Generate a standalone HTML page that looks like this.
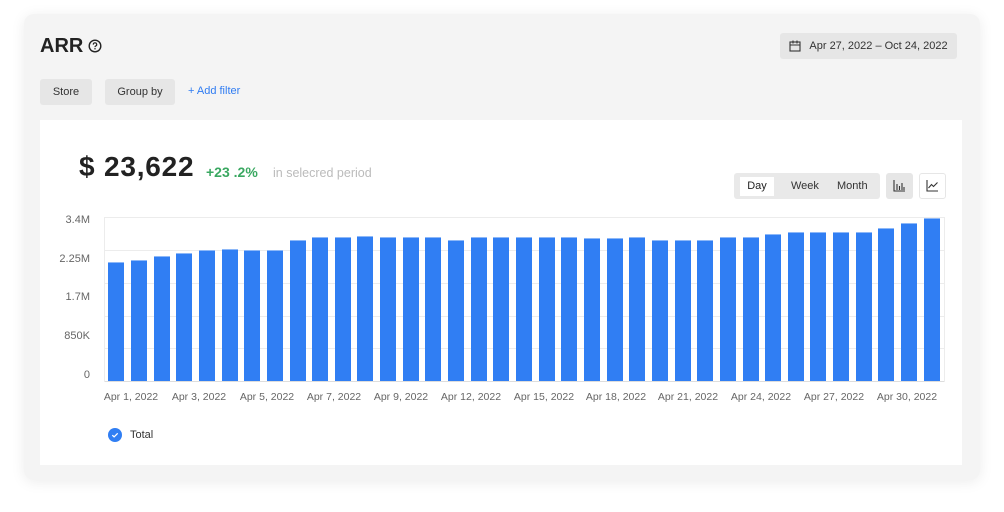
<!DOCTYPE html>
<html><head><meta charset="utf-8"><style>
*{margin:0;padding:0;box-sizing:border-box}
body{width:1004px;height:512px;background:#fff;font-family:"Liberation Sans",Arial,sans-serif;position:relative;overflow:hidden}
.card{position:absolute;left:24px;top:14px;width:956px;height:466px;background:#f4f4f4;border-radius:10px;box-shadow:0 2px 14px rgba(0,0,0,.08)}
.abs{position:absolute}
.btn{position:absolute;background:#e6e6e6;border-radius:3px;font-size:11px;color:#333;display:flex;align-items:center;justify-content:center}
.panel{position:absolute;left:40px;top:120px;width:922px;height:345px;background:#fff}
.yl{position:absolute;right:914px;font-size:11px;color:#666;text-align:right}
.xl{position:absolute;top:391px;font-size:10.5px;color:#666;width:80px;text-align:center}
.grid{position:absolute;left:104px;width:841px;height:1px;background:#ececec}
.bar{position:absolute;width:16px;background:#307ef3;bottom:131px;border-top:1px solid #8db8f8}
</style></head><body>
<div class="card"></div>
<div class="abs" style="left:40px;top:35px;font-size:20px;font-weight:bold;color:#222">ARR</div>
<svg class="abs" style="left:88px;top:39px" width="14" height="14" viewBox="0 0 14 14"><circle cx="7" cy="7" r="5.8" fill="none" stroke="#222" stroke-width="1.4"/><path d="M5.3 5.6a1.7 1.7 0 1 1 2.3 1.5c-.5.2-.6.5-.6 1" fill="none" stroke="#222" stroke-width="1.2"/><circle cx="7" cy="9.8" r=".75" fill="#222"/></svg>
<div class="btn" style="left:780px;top:33px;width:177px;height:26px;color:#333;font-size:11px"><svg width="12" height="12" viewBox="0 0 12 12" style="margin-right:8px"><rect x="1" y="2" width="10" height="9" fill="none" stroke="#333" stroke-width="1.1"/><path d="M1 5h10M4 .5v3M8 .5v3" stroke="#333" stroke-width="1.1"/></svg>Apr 27, 2022 – Oct 24, 2022</div>
<div class="btn" style="left:40px;top:79px;width:52px;height:26px">Store</div>
<div class="btn" style="left:105px;top:79px;width:70px;height:26px">Group by</div>
<div class="abs" style="left:188px;top:85px;font-size:11px;color:#2f7cf2">+ Add filter</div>
<div class="panel"></div>
<div class="abs" style="left:79px;top:151px;font-size:28px;font-weight:bold;color:#222;letter-spacing:.8px">$ 23,622</div>
<div class="abs" style="left:206px;top:164px;font-size:14px;font-weight:bold;color:#3aa861">+23 .2%</div>
<div class="abs" style="left:273px;top:166px;font-size:12.5px;color:#bbb">in selecred period</div>
<div class="abs" style="left:734px;top:173px;width:146px;height:26px;background:#e9e9e9;border-radius:3px"></div>
<div class="abs" style="left:740px;top:177px;width:34px;height:19px;background:#fff;font-size:11px;color:#222;text-align:center;line-height:19px">Day</div>
<div class="abs" style="left:791px;top:180px;font-size:11px;color:#333">Week</div>
<div class="abs" style="left:837px;top:180px;font-size:11px;color:#333">Month</div>
<div class="abs" style="left:886px;top:173px;width:27px;height:26px;background:#e6e6e6;border-radius:3px"></div>
<svg class="abs" style="left:893px;top:179px" width="13" height="13" viewBox="0 0 13 13"><path d="M1 1v11h11M4 11V5M6.5 11V7M9 11V4M11 11V8" stroke="#333" stroke-width="1.1" fill="none"/></svg>
<div class="abs" style="left:919px;top:173px;width:27px;height:26px;background:#fff;border:1px solid #e6e6e6;border-radius:3px"></div>
<svg class="abs" style="left:926px;top:179px" width="13" height="13" viewBox="0 0 13 13"><path d="M1 1v11h11M2.5 9l3-3.5 2 2 4-4" stroke="#333" stroke-width="1.1" fill="none"/></svg>
<div class="grid" style="top:217px"></div><div class="grid" style="top:250px"></div><div class="grid" style="top:283px"></div><div class="grid" style="top:316px"></div><div class="grid" style="top:348px"></div><div class="grid" style="top:381px;background:#ddd"></div>
<div class="abs" style="left:104px;top:217px;width:1px;height:165px;background:#ececec"></div>
<div class="abs" style="left:944px;top:217px;width:1px;height:165px;background:#ececec"></div>
<div class="yl" style="top:214px">3.4M</div><div class="yl" style="top:253px">2.25M</div><div class="yl" style="top:291px">1.7M</div><div class="yl" style="top:330px">850K</div><div class="yl" style="top:369px">0</div>
<div id="bars"></div>
<script>
var t=[262,260,256,253,250,249,250,250,240,237,237,236,237,237,237,240,237,237,237,237,237,238,238,237,240,240,240,237,237,234,232,232,232,232,228,223,218];
var h='';for(var i=0;i<t.length;i++){h+='<div class="bar" style="left:'+(108.3+i*22.65).toFixed(1)+'px;top:'+t[i]+'px"></div>';}
document.getElementById('bars').innerHTML=h;
</script>
<div class="xl" style="left:91px">Apr 1, 2022</div><div class="xl" style="left:159px">Apr 3, 2022</div><div class="xl" style="left:227px">Apr 5, 2022</div><div class="xl" style="left:294px">Apr 7, 2022</div><div class="xl" style="left:361px">Apr 9, 2022</div><div class="xl" style="left:431px">Apr 12, 2022</div><div class="xl" style="left:504px">Apr 15, 2022</div><div class="xl" style="left:576px">Apr 18, 2022</div><div class="xl" style="left:648px">Apr 21, 2022</div><div class="xl" style="left:721px">Apr 24, 2022</div><div class="xl" style="left:794px">Apr 27, 2022</div><div class="xl" style="left:867px">Apr 30, 2022</div>
<svg class="abs" style="left:108px;top:428px" width="14" height="14" viewBox="0 0 14 14"><circle cx="7" cy="7" r="7" fill="#307ef3"/><path d="M4.3 7.2l1.8 1.7 3.6-3.6" stroke="#fff" stroke-width="1.3" fill="none"/></svg>
<div class="abs" style="left:130px;top:429px;font-size:11px;color:#333">Total</div>
</body></html>
